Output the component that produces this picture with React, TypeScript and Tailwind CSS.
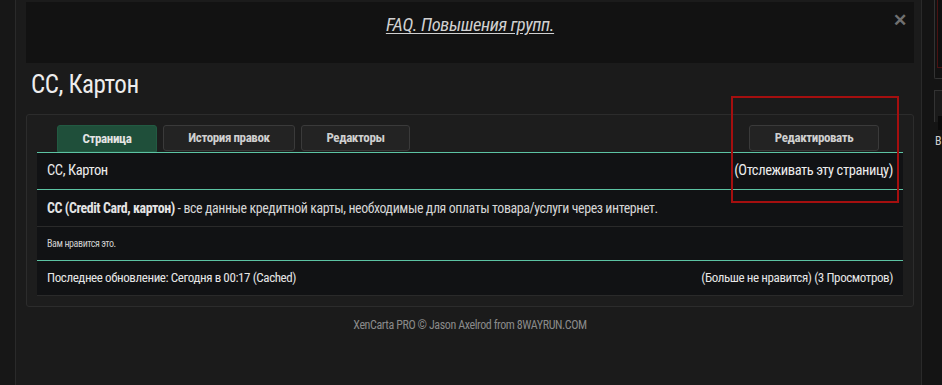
import React from "react";

const font = { fontFamily: '"Roboto Condensed", Roboto, "Liberation Sans", sans-serif' };

// Tab button in the wiki header
function Tab({ label, active }: { label: string; active?: boolean }) {
  return (
    <div
      className={`flex items-center justify-center border text-[13px] font-bold ${
        active
          ? "h-[27px] rounded-t-[3px] border-[#225a42] bg-[#1f4f3a] text-[#e4e4e4]"
          : "mb-[1px] h-[26px] rounded-[3px] border-[#3a3a3a] bg-[#232323] text-[#cfcfcf]"
      }`}
    >
      {label}
    </div>
  );
}

export default function App() {
  return (
    <div className="flex h-[385px] w-[942px] overflow-hidden bg-[#1b1b1b] tracking-tight" style={font}>
      {/* left gutter */}
      <div className="w-[16px] shrink-0 border-r border-[#2a2a2a] bg-[#171717]" />

      {/* main column */}
      <div className="relative flex w-[905px] shrink-0 flex-col px-[10px] pt-[2px]">
        <div className="relative flex h-[61px] w-[888px] items-start justify-center bg-[#121212] pt-[10px]">
          <a className="text-[18.5px] italic text-[#d0d0d0] underline underline-offset-2">FAQ. Повышения групп.</a>
          <span className="absolute right-[7px] top-[10px] text-[17px] font-bold leading-none text-[#707070]">✕</span>
        </div>

        <h1 className="ml-[5px] mt-[8px] text-[25px] leading-[28px] text-[#ededed]">CC, Картон</h1>

        <div className="mt-[15px] w-[888px] rounded-[3px] border border-[#2c2c2c] bg-[#1d1d1d] px-[10px] pb-[10px] pt-[10px]">
          <div className="flex items-end px-[20px]">
            <div className="grid grid-cols-[100px_132px_109px] items-end gap-[6px]">
              <Tab label="Страница" active />
              <Tab label="История правок" />
              <Tab label="Редакторы" />
            </div>
            <div className="mb-[1px] ml-auto mr-[4px] flex h-[26px] w-[130px] items-center justify-center rounded-[3px] border border-[#3a3a3a] bg-[#232323] text-[13px] font-bold text-[#cfcfcf]">
              Редактировать
            </div>
          </div>

          <div className="border-t border-[#5cc3a3] bg-[#111214]">
            <div className="flex h-[37px] items-center justify-between border-b border-[#5cc3a3] px-[10px] text-[14.5px] text-[#ececec]">
              <span>CC, Картон</span>
              <span>(Отслеживать эту страницу)</span>
            </div>
            <div className="flex h-[37px] items-center border-b border-[#2a2a2a] px-[10px] text-[13.9px] text-[#d6d6d6]">
              <span>
                <b className="text-[#e4e4e4]">CC (Credit Card, картон)</b> - все данные кредитной карты, необходимые для оплаты
                товара/услуги через интернет.
              </span>
            </div>
            <div className="flex h-[34px] items-center border-b border-[#5cc3a3] px-[10px] text-[10px] text-[#cfcfcf]">
              Вам нравится это.
            </div>
            <div className="flex h-[35px] items-center justify-between border-b border-[#2a2a2a] px-[10px] text-[13px] text-[#e6e6e6]">
              <span>Последнее обновление: Сегодня в 00:17 (Cached)</span>
              <span>(Больше не нравится) (3 Просмотров)</span>
            </div>
          </div>
        </div>

        <div className="mt-[9px] w-[888px] text-center text-[12px] text-[#8a8a8a]">
          XenCarta PRO © Jason Axelrod from 8WAYRUN.COM
        </div>

        {/* red annotation box */}
        <div className="absolute left-[715px] top-[96px] h-[107px] w-[168px] border-2 border-[#a50f0f]" />
      </div>

      {/* right sidebar edge */}
      <div className="flex w-[21px] shrink-0 flex-col border-l border-[#2a2a2a] bg-[#141414] pl-[12px]">
        <div className="h-[79px] rounded-bl-[2px] border-b border-l border-[#333] bg-[#121212]">
          <div className="ml-[2px] h-[68px] border-b border-l border-[#4a1212] bg-[#0f0f0f]" />
        </div>
        <div className="mt-[11px] h-[32px] border-l border-t border-[#333] bg-[#1a1a1a]">
          <div className="ml-[3px] mt-[25px] h-[14px] bg-[#0a0a0a]" />
        </div>
        <div className="mt-[10px] pl-[1px] text-[12px] text-[#cfcfcf]">B</div>
      </div>
    </div>
  );
}
